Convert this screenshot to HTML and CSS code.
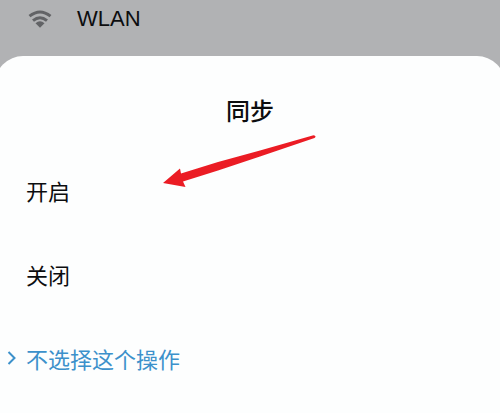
FILE: index.html
```html
<!DOCTYPE html>
<html lang="zh-CN">
<head>
    <meta charset="UTF-8">
    <meta name="viewport" content="width=device-width, initial-scale=1">
    <title>同步</title>
    <link rel="stylesheet" href="styles.css">
</head>
<body>
    <header class="setting">
        <svg class="wifi" viewBox="0 0 24 18" aria-hidden="true">
            <path class="arc" d="M1.500 6.200Q12-2.300 22.500 6.200"/>
            <path class="arc" d="M5 10.600Q12 4.800 19 10.600"/>
            <path d="M7.500 13.200Q12 9.500 16.500 13.200L12 17.800Z"/>
        </svg>
        <span class="network">WLAN</span>
    </header>

    <main class="sheet">
        <h1 class="title">同步</h1>
        <div class="options">
            <button class="option" type="button">开启</button>
            <button class="option" type="button">关闭</button>
            <button class="option selected" type="button">
                <svg class="chevron" viewBox="0 0 10 14" aria-hidden="true">
                    <path d="M1.500 1L7.500 7L1.500 13"/>
                </svg>
                不选择这个操作
            </button>
        </div>
        <!-- arrow pointing at the first option -->
        <svg class="arrow" viewBox="0 0 154 54" aria-hidden="true">
            <path d="M151.500 0.300Q155 1 152.500 3L98 21.500L56 35.500L21 46.500L23.500 52L1 48L18 33.500L19 38.500L56 27L98 15.500Z"/>
        </svg>
    </main>
</body>
</html>
```

FILE: styles.css
```css
body {
    margin: 0;
    min-height: 100vh;
    display: flex;
    flex-direction: column;
    overflow: hidden;
    background-color: #b1b2b4;
    color: #0c0d0f;
    font-family: "Noto Sans CJK SC", sans-serif;
    font-size: 22px;
}

.setting {
    display: flex;
    align-items: center;
    gap: 25px;
    height: 38px;
    padding: 0 28px 18px;
}

.wifi {
    width: 24px;
    height: 18px;
    fill: #626366;
}

.arc {
    fill: none;
    stroke: #626366;
    stroke-width: 3;
}

.network {
    font-family: "Liberation Sans", sans-serif;
}

.sheet {
    position: relative;
    flex: 1;
    margin: 0 -5px;
    padding: 0 5px;
    border-radius: 28px 28px 0 0;
    background-color: #fdfefe;
}

.title {
    margin: 0;
    padding-top: 36px;
    font-size: 24px;
    font-weight: 500;
    line-height: 36px;
    text-align: center;
}

.options {
    display: flex;
    flex-direction: column;
    padding-top: 20px;
}

.option {
    display: flex;
    align-items: center;
    height: 84px;
    padding: 0 26px;
    border: 0;
    background: none;
    color: inherit;
    font: inherit;
    text-align: left;
    cursor: pointer;
}

.selected {
    gap: 9px;
    padding-left: 7px;
    color: #3c91cb;
}

.chevron {
    width: 10px;
    height: 14px;
    fill: none;
    stroke: currentColor;
    stroke-width: 2;
}

.arrow {
    position: absolute;
    top: 79px;
    left: 167px;
    width: 154px;
    height: 54px;
    fill: #eb1c24;
}
```
